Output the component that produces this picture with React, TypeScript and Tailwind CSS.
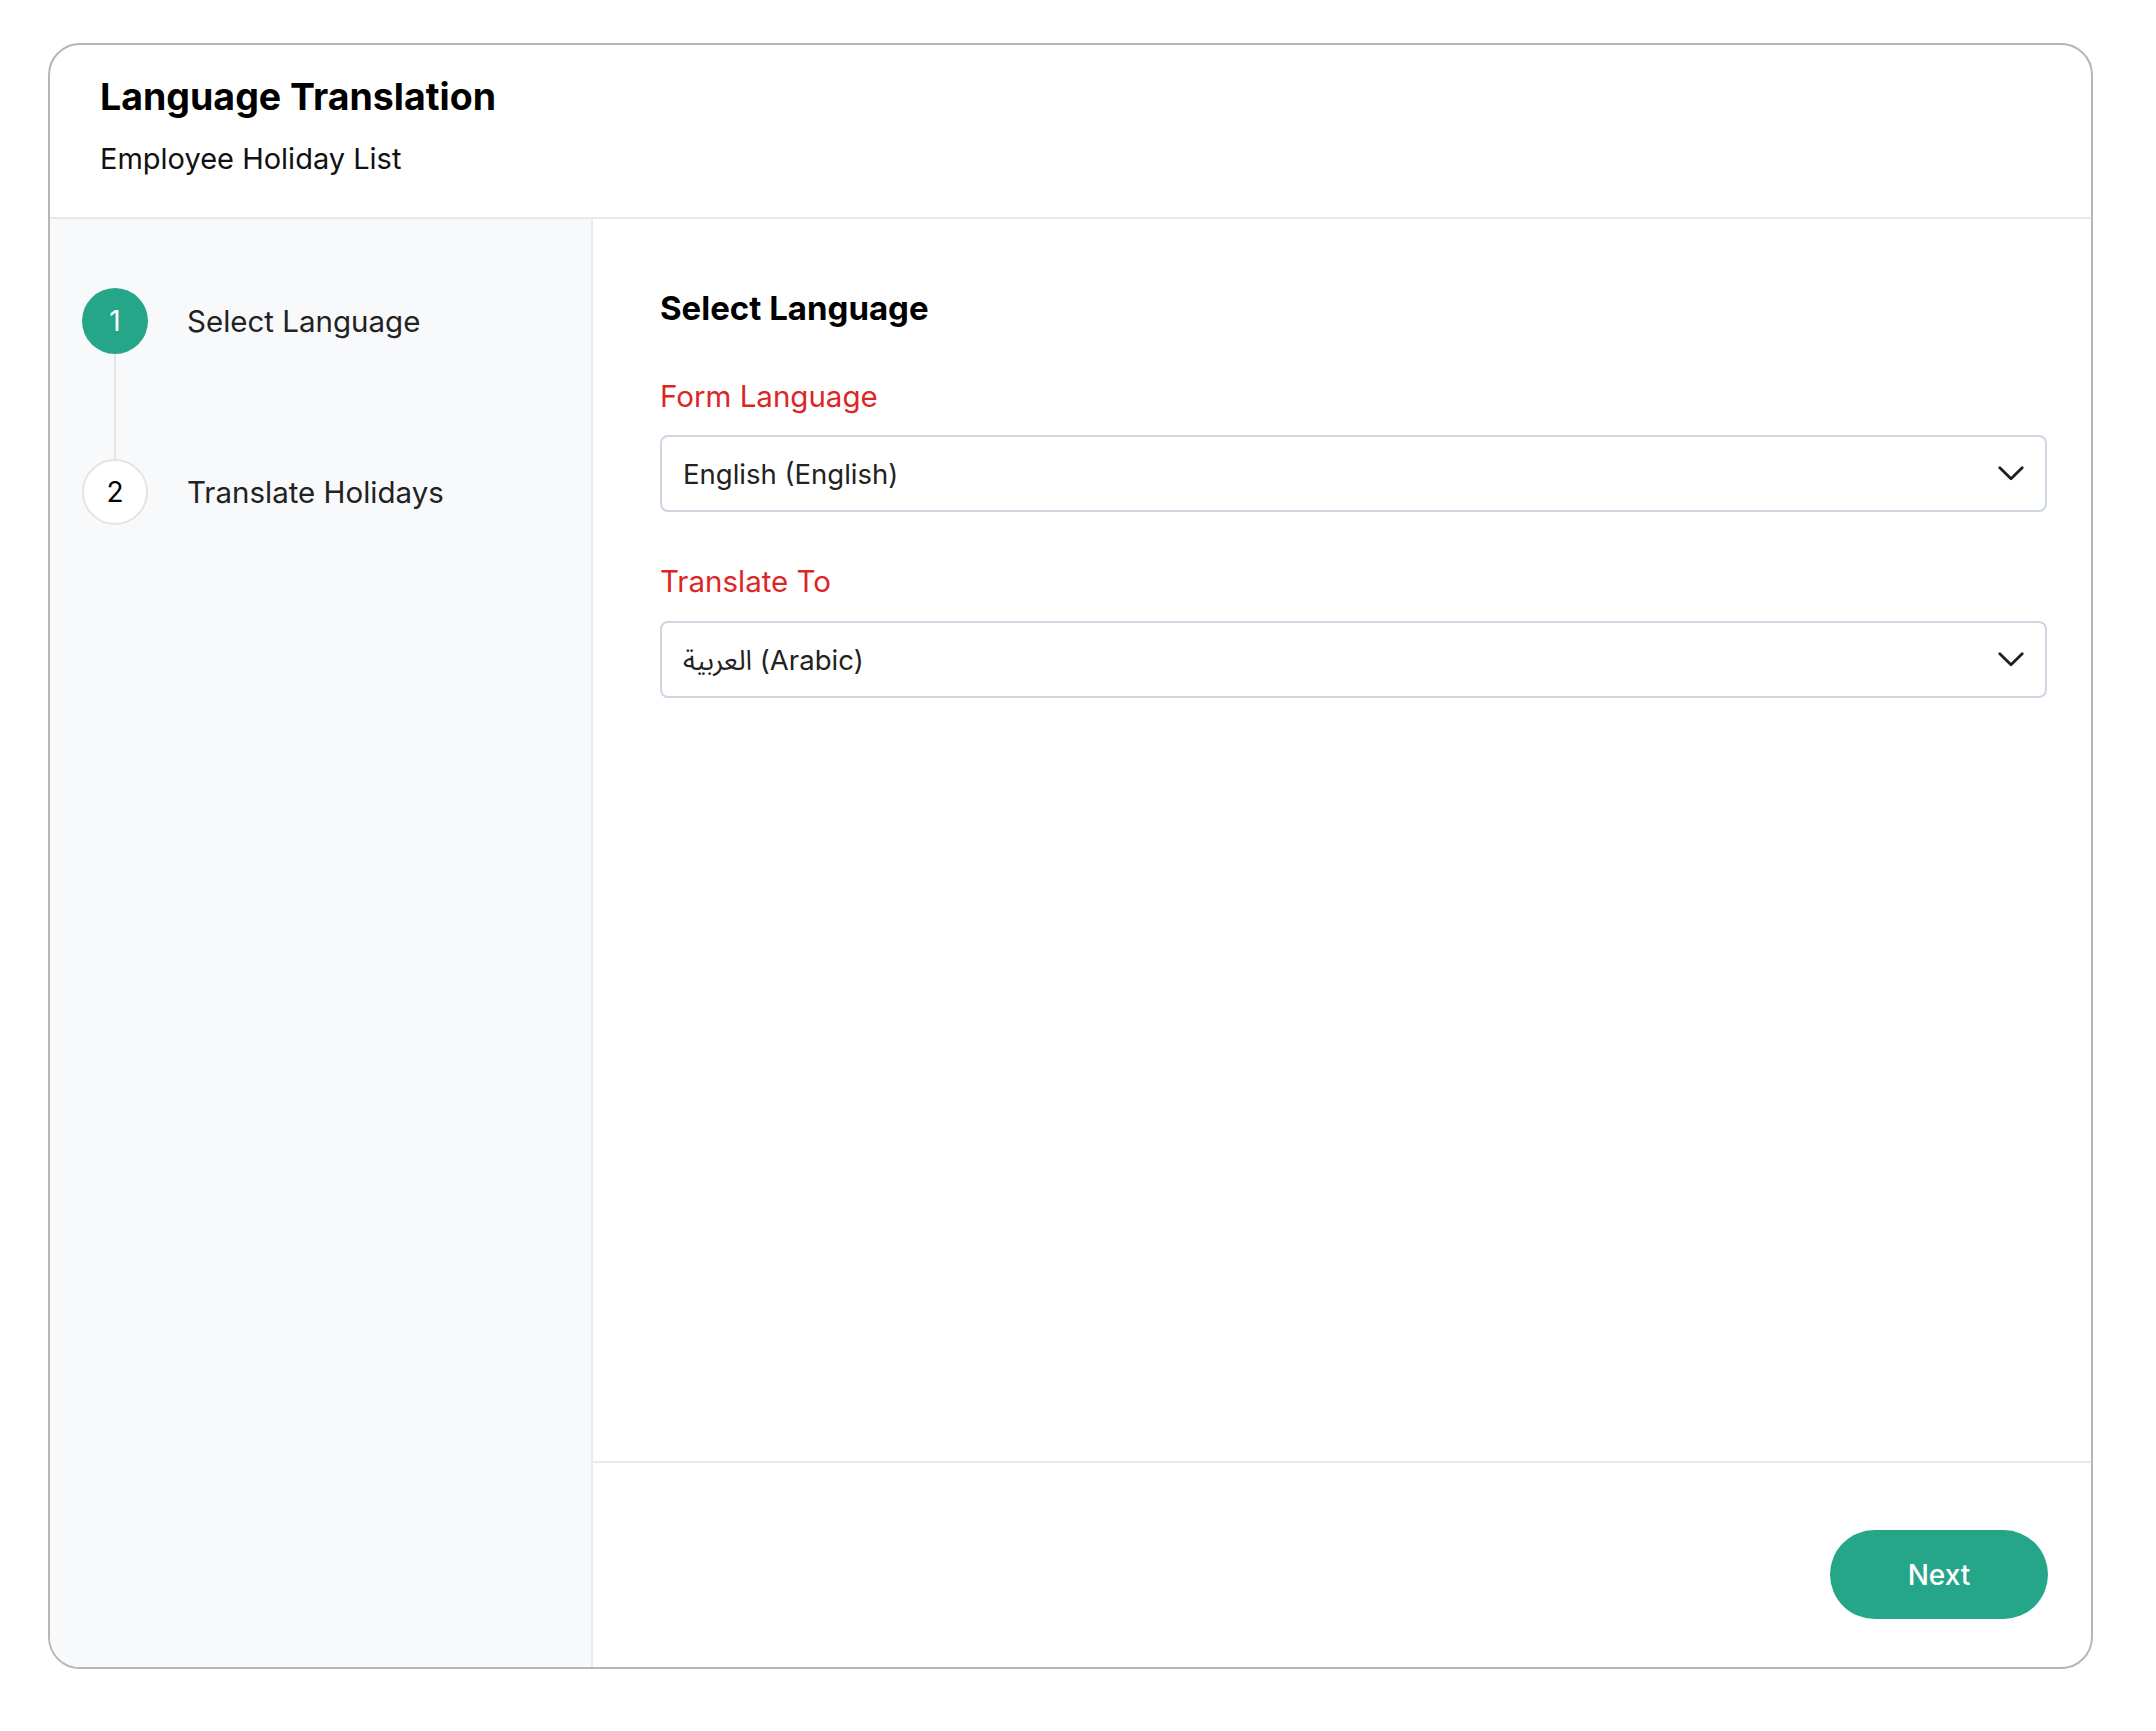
import React from "react";

const ChevronDown = () => (
  <svg width="26" height="15" viewBox="0 0 26 15" fill="none" className="shrink-0">
    <polyline points="1.8,1.8 13,12.8 24.2,1.8" stroke="#1f1f1f" strokeWidth="2.8" strokeLinecap="round" strokeLinejoin="round" />
  </svg>
);

const SelectBox = ({ value }: { value: string }) => (
  <div className="flex h-[77px] items-center justify-between rounded-[8px] border-2 border-[#cdd6e1] bg-white pl-[21px] pr-[21px]">
    <span className="text-[27.5px] leading-[34px] text-[#222222]">{value}</span>
    <ChevronDown />
  </div>
);

const steps = [
  { n: 1, label: "Select Language", active: true },
  { n: 2, label: "Translate Holidays", active: false },
];

export default function App() {
  return (
    <div className="min-h-screen bg-white pl-[48px] pt-[43px]" style={{ fontFamily: "Inter, 'Noto Sans', 'Noto Sans Arabic', 'DejaVu Sans', sans-serif" }}>
      <div className="flex h-[1626px] w-[2045px] flex-col overflow-hidden rounded-[32px] border-2 border-[#b6b6b6] bg-white">
        {/* header */}
        <div className="border-b-2 border-[#e8e9eb] pl-[50px] pt-[30px] pb-[40px]">
          <h1 className="text-[37.5px] font-bold leading-[44px] text-black">Language Translation</h1>
          <p className="mt-[22px] text-[29px] leading-[36px] text-[#111111]">Employee Holiday List</p>
        </div>

        <div className="flex flex-1">
          {/* steps */}
          <div className="w-[543px] border-r-2 border-[#e8e9eb] bg-[#f8f9fb] pl-[32px] pt-[69px]">
            {steps.map((s, i) => (
              <div key={s.n}>
                <div className="flex items-center gap-[39px]">
                  <div
                    className={
                      s.active
                        ? "flex h-[66px] w-[66px] items-center justify-center rounded-full bg-[#26a689] text-[28px] text-white"
                        : "flex h-[66px] w-[66px] items-center justify-center rounded-full border-2 border-[#e4e4e4] bg-white text-[28px] text-black"
                    }
                  >
                    {s.n}
                  </div>
                  <span className="text-[29.5px] leading-[38px] text-[#222222]">{s.label}</span>
                </div>
                {i < steps.length - 1 && <div className="ml-[32px] h-[105px] w-[2px] bg-[#e4e4e4]" />}
              </div>
            ))}
          </div>

          {/* main */}
          <div className="flex flex-1 flex-col">
            <div className="flex-1 pl-[67px] pr-[44px] pt-[69px]">
              <h2 className="text-[33px] font-bold leading-[40px] text-black">Select Language</h2>

              <label className="mt-[50px] block text-[29.5px] leading-[36px] text-[#dc2626]">Form Language</label>
              <div className="mt-[21px]">
                <SelectBox value="English (English)" />
              </div>

              <label className="mt-[51px] block text-[29.5px] leading-[36px] text-[#dc2626]">Translate To</label>
              <div className="mt-[22px]">
                <SelectBox value="العربية (Arabic)" />
              </div>
            </div>

            <div className="flex justify-end border-t-2 border-[#e8e9eb] pb-[48px] pr-[43px] pt-[67px]">
              <button className="h-[89px] w-[218px] rounded-full bg-[#26a689] text-[28px] font-medium text-white">
                Next
              </button>
            </div>
          </div>
        </div>
      </div>
    </div>
  );
}
